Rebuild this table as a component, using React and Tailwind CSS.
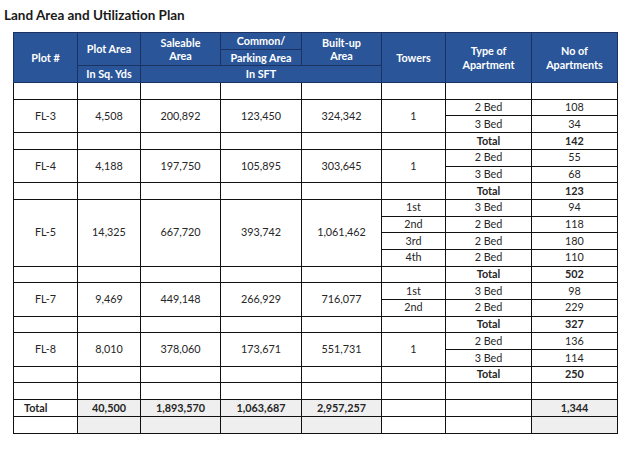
const hd = "border border-[#1b3263] bg-[#2a5699] text-white font-bold text-[10.8px] leading-[13.5px] text-center p-0";

function C({ children, rs, cs, b, left, gray }) {
  return (
    <td
      rowSpan={rs}
      colSpan={cs}
      className={
        "border border-[#111] p-0 text-[10.8px] leading-none text-[#262626] " +
        (b ? "font-bold " : "") +
        (left ? "text-left pl-[10px] " : "text-center ") +
        (gray ? "bg-[#efefef]" : "bg-white")
      }
    >
      {children}
    </td>
  );
}

function Blank({ n }) {
  return Array.from({ length: n }).map((_, i) => <C key={i} />);
}

export default function App() {
  const R = "h-[16.7px]";
  return (
    <div className="w-[633px] h-[450px] bg-white font-['Lato',sans-serif] text-[#222] overflow-hidden">
      <div className="pl-[4px] pt-[6px] h-[32px]">
        <h1 className="text-[13.5px] leading-[18px] font-bold text-[#1a1a1a]">Land Area and Utilization Plan</h1>
      </div>
      <table className="ml-[13px] w-[604px] table-fixed border-collapse">
        <colgroup>
          <col className="w-[64px]" />
          <col className="w-[63px]" />
          <col className="w-[80px]" />
          <col className="w-[81px]" />
          <col className="w-[80px]" />
          <col className="w-[64px]" />
          <col className="w-[86px]" />
          <col className="w-[86px]" />
        </colgroup>
        <thead>
          <tr className={R}>
            <th rowSpan={3} className={hd}>Plot #</th>
            <th rowSpan={2} className={hd}>Plot Area</th>
            <th rowSpan={2} className={hd}>Saleable<br />Area</th>
            <th className={hd}>Common/</th>
            <th rowSpan={2} className={hd}>Built-up<br />Area</th>
            <th rowSpan={3} className={hd}>Towers</th>
            <th rowSpan={3} className={hd}>Type of<br />Apartment</th>
            <th rowSpan={3} className={hd}>No of<br />Apartments</th>
          </tr>
          <tr className={R}>
            <th className={hd}>Parking Area</th>
          </tr>
          <tr className={R}>
            <th className={hd}>In Sq. Yds</th>
            <th colSpan={3} className={hd}>In SFT</th>
          </tr>
        </thead>
        <tbody>
          <tr className={R}><Blank n={8} /></tr>

          <tr className={R}>
            <C rs={2}>FL-3</C><C rs={2}>4,508</C><C rs={2}>200,892</C><C rs={2}>123,450</C><C rs={2}>324,342</C><C rs={2}>1</C>
            <C>2 Bed</C><C>108</C>
          </tr>
          <tr className={R}><C>3 Bed</C><C>34</C></tr>
          <tr className={R}><Blank n={6} /><C b>Total</C><C b>142</C></tr>

          <tr className={R}>
            <C rs={2}>FL-4</C><C rs={2}>4,188</C><C rs={2}>197,750</C><C rs={2}>105,895</C><C rs={2}>303,645</C><C rs={2}>1</C>
            <C>2 Bed</C><C>55</C>
          </tr>
          <tr className={R}><C>3 Bed</C><C>68</C></tr>
          <tr className={R}><Blank n={6} /><C b>Total</C><C b>123</C></tr>

          <tr className={R}>
            <C rs={4}>FL-5</C><C rs={4}>14,325</C><C rs={4}>667,720</C><C rs={4}>393,742</C><C rs={4}>1,061,462</C>
            <C>1st</C><C>3 Bed</C><C>94</C>
          </tr>
          <tr className={R}><C>2nd</C><C>2 Bed</C><C>118</C></tr>
          <tr className={R}><C>3rd</C><C>2 Bed</C><C>180</C></tr>
          <tr className={R}><C>4th</C><C>2 Bed</C><C>110</C></tr>
          <tr className={R}><Blank n={6} /><C b>Total</C><C b>502</C></tr>

          <tr className={R}>
            <C rs={2}>FL-7</C><C rs={2}>9,469</C><C rs={2}>449,148</C><C rs={2}>266,929</C><C rs={2}>716,077</C>
            <C>1st</C><C>3 Bed</C><C>98</C>
          </tr>
          <tr className={R}><C>2nd</C><C>2 Bed</C><C>229</C></tr>
          <tr className={R}><Blank n={6} /><C b>Total</C><C b>327</C></tr>

          <tr className={R}>
            <C rs={2}>FL-8</C><C rs={2}>8,010</C><C rs={2}>378,060</C><C rs={2}>173,671</C><C rs={2}>551,731</C><C rs={2}>1</C>
            <C>2 Bed</C><C>136</C>
          </tr>
          <tr className={R}><C>3 Bed</C><C>114</C></tr>
          <tr className={R}><Blank n={6} /><C b>Total</C><C b>250</C></tr>

          <tr className={R}><Blank n={8} /></tr>
          <tr className={R}>
            <C b left>Total</C><C b gray>40,500</C><C b gray>1,893,570</C><C b gray>1,063,687</C><C b gray>2,957,257</C>
            <C /><C /><C b gray>1,344</C>
          </tr>
          <tr className={R}>
            <C /><C gray /><C gray /><C gray /><C gray /><C /><C /><C gray />
          </tr>
        </tbody>
      </table>
    </div>
  );
}
